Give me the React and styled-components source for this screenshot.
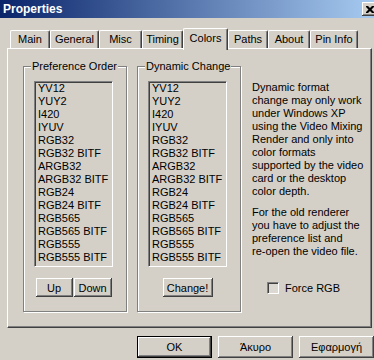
import React from 'react';
import styled, { createGlobalStyle, css } from 'styled-components';

const FACE = '#d4d0c8';

const GlobalStyle = createGlobalStyle`
  html, body {
    margin: 0;
    padding: 0;
    background: ${FACE};
    overflow: hidden;
  }
  body {
    font-family: "Liberation Sans", Arial, sans-serif;
    font-size: 11px;
    color: #000;
  }
`;

const tabs = [
  { label: 'Main', width: 40 },
  { label: 'General', width: 49 },
  { label: 'Misc', width: 43 },
  { label: 'Timing', width: 41 },
  { label: 'Colors', width: 45, active: true },
  { label: 'Paths', width: 40 },
  { label: 'About', width: 42 },
  { label: 'Pin Info', width: 48 },
];

const formats = [
  'YV12',
  'YUY2',
  'I420',
  'IYUV',
  'RGB32',
  'RGB32 BITF',
  'ARGB32',
  'ARGB32 BITF',
  'RGB24',
  'RGB24 BITF',
  'RGB565',
  'RGB565 BITF',
  'RGB555',
  'RGB555 BITF',
];

const App = () => {
  return (
    <>
      <GlobalStyle />
      <Window>
        <TitleBar>
          <Title>Properties</Title>
          <CloseButton>
            <svg width="8" height="7" viewBox="0 0 8 7">
              <path d="M0 0h2l2 2 2-2h2v1L5.5 3.5 8 6v1H6L4 5 2 7H0V6l2.5-2.5L0 1z" fill="#000" />
            </svg>
          </CloseButton>
        </TitleBar>

        <Body>
          <TabRow>
            {tabs.map((t) => (
              <Tab key={t.label} $width={t.width} $active={t.active}>
                {t.label}
              </Tab>
            ))}
          </TabRow>

          <Panel>
            <GroupBox>
              <Legend>Preference Order</Legend>
              <Column>
                <ListBox>
                  {formats.map((f) => (
                    <ListItem key={f}>{f}</ListItem>
                  ))}
                </ListBox>
                <ButtonRow>
                  <Button $width={37}>Up</Button>
                  <Button $width={38}>Down</Button>
                </ButtonRow>
              </Column>
            </GroupBox>

            <GroupBox>
              <Legend>Dynamic Change</Legend>
              <Column>
                <ListBox>
                  {formats.map((f) => (
                    <ListItem key={f}>{f}</ListItem>
                  ))}
                </ListBox>
                <ButtonRow>
                  <Button $width={50}>Change!</Button>
                </ButtonRow>
              </Column>
            </GroupBox>

            <Notes>
              <Paragraph>
                Dynamic format<br />
                change may only work<br />
                under Windows XP<br />
                using the Video Mixing<br />
                Render and only into<br />
                color formats<br />
                supported by the video<br />
                card or the desktop<br />
                color depth.
              </Paragraph>
              <Paragraph $gap>
                For the old renderer<br />
                you have to adjust the<br />
                preference list and<br />
                re-open the video file.
              </Paragraph>
              <CheckRow>
                <CheckBox />
                <span>Force RGB</span>
              </CheckRow>
            </Notes>
          </Panel>

          <DialogButtons>
            <Button $width={75} $height={22} $default>OK</Button>
            <Button $width={75} $height={22}>Άκυρο</Button>
            <Button $width={75} $height={22}>Εφαρμογή</Button>
          </DialogButtons>
        </Body>
      </Window>
    </>
  );
};

export default App;

const Window = styled.div`
  width: 374px;
  height: 360px;
  background: ${FACE};
  overflow: hidden;
  display: flex;
  flex-direction: column;
`;

const TitleBar = styled.div`
  height: 18px;
  display: flex;
  align-items: center;
  justify-content: space-between;
  padding-left: 3px;
  background: linear-gradient(to right, #0a246a, #a6caf0);
`;

const Title = styled.span`
  color: #fff;
  font-weight: bold;
  font-size: 12px;
`;

const CloseButton = styled.div`
  width: 16px;
  height: 14px;
  margin-right: -4px;
  box-sizing: border-box;
  background: ${FACE};
  display: flex;
  align-items: center;
  justify-content: center;
  box-shadow: inset -1px -1px #404040, inset 1px 1px #fff, inset -2px -2px #808080;
`;

const Body = styled.div`
  padding: 9px 2px 0 7px;
`;

const TabRow = styled.div`
  height: 21px;
  display: flex;
  align-items: flex-end;
  padding-left: 3px;
`;

const Tab = styled.div`
  width: ${(p) => p.$width}px;
  height: 18px;
  box-sizing: border-box;
  text-align: center;
  line-height: 16px;
  white-space: nowrap;
  background: ${FACE};
  border-top: 1px solid #fff;
  border-left: 1px solid #fff;
  border-right: 1px solid #404040;
  border-radius: 2px 2px 0 0;
  box-shadow: inset -1px 0 #808080;

  ${(p) =>
    p.$active &&
    css`
      height: 22px;
      line-height: 18px;
      margin-bottom: -2px;
      position: relative;
      z-index: 1;
    `}
`;

const Panel = styled.div`
  height: 280px;
  box-sizing: border-box;
  display: flex;
  align-items: flex-start;
  gap: 10px;
  padding: 17px 0 0 15px;
  border-top: 1px solid #fff;
  border-left: 1px solid #fff;
  border-right: 1px solid #404040;
  border-bottom: 1px solid #404040;
  box-shadow: inset -1px -1px #808080;
`;

const GroupBox = styled.div`
  position: relative;
  width: 104px;
  height: 246px;
  box-sizing: border-box;
  padding: 14px 0 0 10px;
  border: 1px solid #808080;
  box-shadow: inset 1px 1px #fff, 1px 1px #fff;
`;

const Legend = styled.span`
  position: absolute;
  top: -7px;
  left: 7px;
  padding: 0 1px;
  line-height: 13px;
  background: ${FACE};
  white-space: nowrap;
`;

const Column = styled.div`
  width: 79px;
  display: flex;
  flex-direction: column;
  align-items: center;
`;

const ListBox = styled.div`
  width: 79px;
  height: 186px;
  box-sizing: border-box;
  padding: 0 0 0 3px;
  background: ${FACE};
  border-top: 1px solid #808080;
  border-left: 1px solid #808080;
  border-right: 1px solid #fff;
  border-bottom: 1px solid #fff;
  box-shadow: inset 1px 1px #404040;
`;

const ListItem = styled.div`
  line-height: 13px;
  white-space: nowrap;
`;

const ButtonRow = styled.div`
  display: flex;
  gap: 1px;
  margin-top: 11px;
`;

const Button = styled.button`
  width: ${(p) => p.$width}px;
  height: ${(p) => p.$height || 19}px;
  box-sizing: border-box;
  padding: 0;
  font: inherit;
  color: #000;
  background: ${FACE};
  border: none;
  box-shadow: inset -1px -1px #404040, inset 1px 1px #fff, inset -2px -2px #808080;

  ${(p) =>
    p.$default &&
    css`
      border: 1px solid #000;
    `}
`;

const Notes = styled.div`
  margin: 15px 0 0 1px;
  display: flex;
  flex-direction: column;
`;

const Paragraph = styled.p`
  margin: ${(p) => (p.$gap ? '8px' : '0')} 0 0;
  line-height: 13px;
  white-space: nowrap;
`;

const CheckRow = styled.div`
  display: flex;
  align-items: center;
  gap: 6px;
  height: 13px;
  margin-top: 23px;
  padding-left: 15px;
`;

const CheckBox = styled.span`
  width: 12px;
  height: 12px;
  box-sizing: border-box;
  border-top: 1px solid #808080;
  border-left: 1px solid #808080;
  border-right: 1px solid #fff;
  border-bottom: 1px solid #fff;
  box-shadow: inset 1px 1px #404040;
  background: #dcd9d2;
`;

const DialogButtons = styled.div`
  display: flex;
  justify-content: flex-end;
  gap: 6px;
  margin: 8px -2px 0 0;
`;
